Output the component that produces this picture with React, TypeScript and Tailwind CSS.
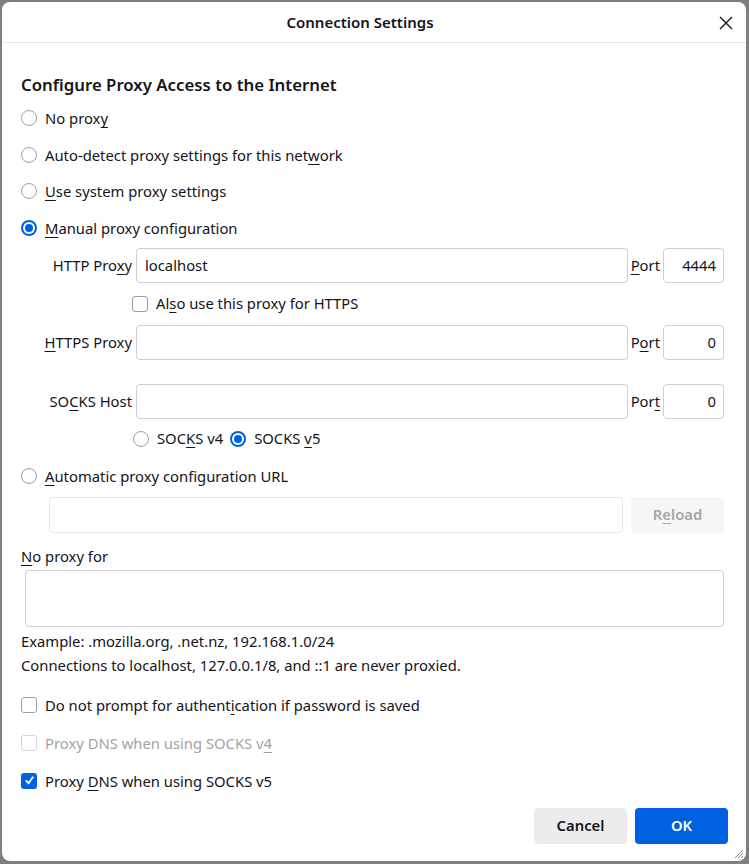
import React from "react";

const font = { fontFamily: '"Noto Sans", "Open Sans", sans-serif' };

function Radio({ checked, label, className = "" }: { checked?: boolean; label: React.ReactNode; className?: string }) {
  return (
    <label className={`flex items-center gap-2 ${className}`}>
      {checked ? (
        <span className="flex h-4 w-4 items-center justify-center rounded-full bg-[#0061e0]">
          <span className="flex h-[12px] w-[12px] items-center justify-center rounded-full bg-white">
            <span className="h-[8px] w-[8px] rounded-full bg-[#0061e0]" />
          </span>
        </span>
      ) : (
        <span className="h-4 w-4 rounded-full border border-[#9f9fa6] bg-white" />
      )}
      <span className="whitespace-nowrap">{label}</span>
    </label>
  );
}

function Check({ checked, disabled, label, className = "" }: { checked?: boolean; disabled?: boolean; label: React.ReactNode; className?: string }) {
  return (
    <label className={`flex items-center gap-2 ${disabled ? "text-[#a3a3a6]" : ""} ${className}`}>
      {checked ? (
        <span className="flex h-4 w-4 items-center justify-center rounded-[3px] bg-[#0061e0]">
          <svg width="11" height="11" viewBox="0 0 12 12" fill="none">
            <path d="M2.5 6.5 L5 9 L9.5 2.5" stroke="white" strokeWidth="2" strokeLinecap="round" strokeLinejoin="round" />
          </svg>
        </span>
      ) : (
        <span className={`h-4 w-4 rounded-[3px] border bg-white ${disabled ? "border-[#d6d6d9]" : "border-[#9f9fa6]"}`} />
      )}
      <span className="whitespace-nowrap">{label}</span>
    </label>
  );
}

function K({ children }: { children: React.ReactNode }) {
  return <span className="underline underline-offset-[3px] decoration-1">{children}</span>;
}

function Field({ value }: { value?: string }) {
  return (
    <div className="flex h-[35px] flex-1 items-center rounded-[4px] border border-[#cfcfd3] bg-white px-[8px]">
      {value}
    </div>
  );
}

function Port({ value, label }: { value: string; label: React.ReactNode }) {
  return (
    <>
      <span className="ml-[3px] mr-[3px]">{label}</span>
      <div className="flex h-[35px] w-[61px] items-center justify-end rounded-[4px] border border-[#cfcfd3] bg-white px-[7px]">
        {value}
      </div>
    </>
  );
}

function ProxyRow({ label, value, port, portLabel }: { label: React.ReactNode; value?: string; port: string; portLabel: React.ReactNode }) {
  return (
    <div className="flex items-center">
      <span className="w-[92px] whitespace-nowrap pr-[4px] text-right">{label}</span>
      <Field value={value} />
      <Port value={port} label={portLabel} />
    </div>
  );
}

export default function App() {
  return (
    <div className="min-h-screen bg-[#7f7f7f] pl-[2px] pr-[3px] pt-[2px]" style={font}>
      <div className="relative flex h-[859px] flex-col rounded-[8px] bg-white text-[14.8px] text-[#15141a]">
        <div className="relative flex h-[41px] items-center justify-center border-b border-[#e8e8ea] pr-[28px] text-[15px]">
          <span className="font-semibold">Connection Settings</span>
          <svg className="absolute right-[13px] top-[14px]" width="14" height="14" viewBox="0 0 14 14">
            <path d="M1 1 L13 13 M13 1 L1 13" stroke="#15141a" strokeWidth="1.4" />
          </svg>
        </div>

        <div className="flex flex-col pl-[19px] pr-[22px]">
          <h1 className="mt-[31px] text-[16.8px] font-semibold leading-[22px]">Configure Proxy Access to the Internet</h1>
          <div className="mt-[11px] flex flex-col gap-[14.5px] leading-[22px]">
            <Radio label={<>No prox<K>y</K></>} />
            <Radio label={<>Auto-detect proxy settings for this net<K>w</K>ork</>} />
            <Radio label={<><K>U</K>se system proxy settings</>} />
            <Radio checked label={<><K>M</K>anual proxy configuration</>} />
          </div>

          <div className="ml-[23px] mt-[9px] flex flex-col">
            <ProxyRow label={<>HTTP Pro<K>x</K>y</>} value="localhost" port="4444" portLabel={<><K>P</K>ort</>} />
            <Check className="ml-[88px] mt-[12px] h-[18px]" label={<>Al<K>s</K>o use this proxy for HTTPS</>} />
            <div className="mt-[12px]">
              <ProxyRow label={<><K>H</K>TTPS Proxy</>} port="0" portLabel={<>P<K>o</K>rt</>} />
            </div>
            <div className="mt-[24px]">
              <ProxyRow label={<>SO<K>C</K>KS Host</>} port="0" portLabel={<>Por<K>t</K></>} />
            </div>
            <div className="ml-[89px] mt-[9px] flex h-[22px] items-center gap-[7px]">
              <Radio label={<>SOC<K>K</K>S v4</>} />
              <Radio checked label={<>SOCKS <K>v</K>5</>} />
            </div>
          </div>

          <Radio className="mt-[15px] leading-[22px]" label={<><K>A</K>utomatic proxy configuration URL</>} />
          <div className="ml-[28px] mt-[10px] flex gap-[8px]">
            <div className="h-[36px] flex-1 rounded-[4px] border border-[#e6e6e9] bg-white" />
            <div className="flex h-[36px] w-[93px] items-center justify-center rounded-[4px] bg-[#f6f6f7] font-semibold text-[#a6a6aa]">
              R<K>e</K>load
            </div>
          </div>

          <div className="mt-[12px] leading-[22px]"><K>N</K>o proxy for</div>
          <div className="ml-[4px] mt-[3px] h-[57px] rounded-[4px] border border-[#cfcfd3] bg-white" />
          <div className="mt-[2px] leading-[24px]">
            <div>Example: .mozilla.org, .net.nz, 192.168.1.0/24</div>
            <div>Connections to localhost, 127.0.0.1/8, and ::1 are never proxied.</div>
          </div>

          <div className="mt-[17px] flex flex-col gap-[16px] leading-[22px]">
            <Check label={<>Do not prompt for authent<K>i</K>cation if password is saved</>} />
            <Check disabled label={<>Proxy DNS when using SOCKS v<K>4</K></>} />
            <Check checked label={<>Proxy <K>D</K>NS when using SOCKS v5</>} />
          </div>

          <div className="mt-[16px] flex justify-end gap-[8px]">
            <button className="h-[36px] w-[93px] rounded-[4px] bg-[#ececee] font-semibold">Cancel</button>
            <button className="-mr-[4px] h-[36px] w-[93px] rounded-[4px] bg-[#0061e0] font-semibold text-white">OK</button>
          </div>
        </div>

        <svg className="absolute bottom-[2px] right-[2px]" width="11" height="11" viewBox="0 0 11 11">
          <path d="M10 2 L2 10 M10 5 L5 10 M10 8 L8 10" stroke="#8a8a8a" strokeWidth="1" />
        </svg>
      </div>
    </div>
  );
}
